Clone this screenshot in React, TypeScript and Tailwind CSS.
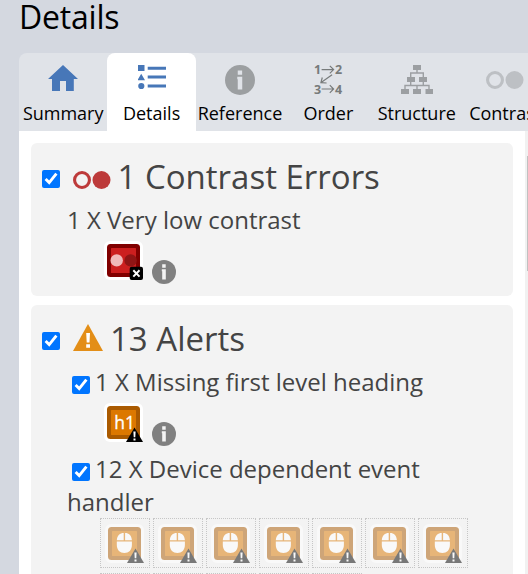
import type { ReactNode } from "react";

const font = "font-['Open_Sans','Noto_Sans',sans-serif]";

function Home() {
  return (
    <svg width="30" height="26" viewBox="0 0 30 26" fill="#4777b8">
      <path d="M15 0 30 14H25.800V26H18V16H12V26H4V14H0Z" />
    </svg>
  );
}

function DetailsIcon() {
  return (
    <svg width="28" height="25" viewBox="0 0 28 25" fill="#4777b8">
      <path d="M0 0H6.500V6H0ZM3.200 8.800 7 15.200H-.5ZM9.700 1.700H28V4.700H9.700ZM9.700 10.500H28V13.500H9.700ZM9.700 19.500H28V22.500H9.700Z" />
      <circle cx="3.300" cy="21" r="3.100" />
    </svg>
  );
}

function Info({ size, color, glyph }: { size: number; color: string; glyph: string }) {
  return (
    <svg width={size} height={size} viewBox="0 0 24 24" className="block shrink-0">
      <circle cx="12" cy="12" r="12" fill={color} />
      <path d="M10.200 4.300H13.700V7.700H10.200ZM9.800 9.300H13.800V19.500H10.200V11.300H9.800Z" fill={glyph} />
    </svg>
  );
}

function OrderIcon() {
  return (
    <svg width="30" height="30" viewBox="-0.6 0 30 30" fill="#777b7b" className="overflow-visible">
      <g fontFamily="Open Sans" fontSize="12.500" fontWeight="700">
        <text x="0.500" y="9">1</text>
        <text x="21.500" y="9">2</text>
        <text x="0.500" y="28.500">3</text>
        <text x="21.500" y="28.500">4</text>
      </g>
      <path d="M8 4.600H20M16.200 .8 20 4.600 16.200 8.400M8 24H20M16.200 20.200 20 24 16.200 27.800M18.500 9.800 7.500 17.500M8.700 12.500 7.300 17.700 13 18" fill="none" stroke="#777b7b" strokeWidth="1.200" />
    </svg>
  );
}

function StructureIcon() {
  return (
    <svg width="32" height="29" viewBox="0 0 32 29" fill="#9c9fa2">
      <path d="M12 0H20V5H12ZM6 12H14V17H6ZM18 12H26V17H18ZM0 24H8V29H0ZM12 24H20V29H12ZM24.500 24H32V29H24.500Z" />
      <path d="M16 5V8M9.700 12V8H22.300V12M9.700 17V20.500M22.300 17V20.500M4 24V20.500H28V24M16 20.500V24" fill="none" stroke="#9c9fa2" strokeWidth="1.400" />
    </svg>
  );
}

function Contrast({ color }: { color: string }) {
  return (
    <svg width="38" height="18" viewBox="0 0 38 18" className="block shrink-0">
      <circle cx="9" cy="9" r="7.450" fill="none" stroke={color} strokeWidth="3.100" />
      <circle cx="28.500" cy="9" r="9" fill={color} />
    </svg>
  );
}

function Warning() {
  return (
    <svg width="30" height="27" viewBox="0 0 30 27" className="block shrink-0">
      <path d="M15 0 30 27H0Z" fill="#e38e17" />
      <path d="M13.200 9H17L16.500 18.500H13.700ZM13.200 20.300H17V23.700H13.200Z" fill="#fff" />
    </svg>
  );
}

function BadgeTriangle() {
  return (
    <>
      <path d="M30.500 24.500 39 39H22Z" fill="#000" />
      <path d="M29.400 28.500H31.600L31.300 34.200H29.700ZM29.500 35.400H31.500V37.400H29.500Z" fill="#fff" />
    </>
  );
}

function Tile({ border, fill, children }: { border: string; fill: string; children: ReactNode }) {
  return (
    <svg width="39" height="39" viewBox="0 0 39 39" className="block shrink-0">
      <rect width="39" height="39" rx="6" fill="#fff" />
      <rect x="3" y="3" width="33" height="33" rx="3.500" fill={border} />
      <rect x="7" y="7" width="25" height="25" rx="0.500" fill={fill} />
      {children}
    </svg>
  );
}

function ContrastTile() {
  return (
    <Tile border="#800000" fill="#cc1f1f">
      <circle cx="12.700" cy="19.400" r="6.200" fill="#f0b9b9" />
      <circle cx="26.600" cy="19.400" r="6.200" fill="#8f1515" />
      <rect x="25.700" y="25.700" width="13.300" height="13.300" rx="2" fill="#000" />
      <path d="M29.300 29.200 35.500 35.600M35.500 29.200 29.300 35.600" stroke="#fff" strokeWidth="2" />
    </Tile>
  );
}

function HeadingTile() {
  return (
    <Tile border="#aa5a00" fill="#dc7800">
      <text x="10.300" y="26.200" fill="#fff" stroke="#fff" strokeWidth="0.300" fontFamily="Open Sans" fontSize="17.500">h1</text>
      <BadgeTriangle />
    </Tile>
  );
}

function MouseTile() {
  return (
    <div className="flex h-[50px] w-[50px] border border-dotted border-[#c6c6c6] pl-1 pt-[5px]">
      <div className="h-[39px] opacity-50">
        <Tile border="#aa5a00" fill="#dc7800">
          <path d="M11.800 16.200C12.200 11.500 15 9 18.700 9V16.200ZM20.100 9C23.900 9 26.500 11.500 26.900 16.200H20.100ZM11.800 17.600H26.900V21C26.900 26 23.800 29 19.400 29S11.800 26 11.800 21Z" fill="#fff" />
          <BadgeTriangle />
        </Tile>
      </div>
    </div>
  );
}

function Check() {
  return <input type="checkbox" defaultChecked className="m-0 block h-[18px] w-[18px] shrink-0" />;
}

function Tab({ label, icon, active }: { label: string; icon: ReactNode; active?: boolean }) {
  return (
    <div className={`flex h-[78px] w-[88.400px] shrink-0 flex-col items-center ${active ? "rounded-t-lg bg-white" : ""}`}>
      <div className="flex h-[48px] shrink-0 items-start justify-center pt-3">{icon}</div>
      <span className="whitespace-nowrap text-[18px] leading-6">{label}</span>
    </div>
  );
}

export default function App() {
  return (
    <div className={`flex h-[574px] w-[528px] flex-col overflow-hidden bg-[#d4d8e0] pl-[19px] text-black ${font}`}>
      <h1 className="h-[53px] shrink-0 text-[32px] leading-[33px] tracking-[-0.200px]">Details</h1>
      <nav className="flex h-[78px] shrink-0 overflow-hidden rounded-tl-lg bg-[#e0e3e8]">
        <Tab label="Summary" icon={<Home />} />
        <Tab label="Details" icon={<DetailsIcon />} active />
        <Tab label="Reference" icon={<Info size={30} color="#9c9fa1" glyph="#e0e3e8" />} />
        <Tab label="Order" icon={<OrderIcon />} />
        <Tab label="Structure" icon={<StructureIcon />} />
        <Tab label="Contrast" icon={<div className="pt-1.5"><Contrast color="#bdc0c4" /></div>} />
      </nav>
      <div className="flex h-[443px] shrink-0 overflow-hidden text-[#444]">
        <main className="flex w-[506px] shrink-0 flex-col gap-[9px] bg-white pl-3 pt-3">
          <section className="h-[153px] w-[482px] shrink-0 rounded-md bg-[#f3f3f3] pl-[11px]">
            <div className="flex h-[60px] items-start">
              <div className="pt-[27px]"><Check /></div>
              <div className="ml-[13px] pt-[28px]"><Contrast color="#bd3a3a" /></div>
              <h2 className="ml-[6.500px] whitespace-nowrap pt-[11px] text-[33px] leading-[46px]">1 Contrast Errors</h2>
            </div>
            <h3 className="ml-[25px] text-[24px] leading-[33px]">1 X Very low contrast</h3>
            <div className="ml-[62px] flex pt-[5px]">
              <ContrastTile />
              <div className="ml-[9px] pt-[19px]"><Info size={24} color="#808080" glyph="#f3f3f3" /></div>
            </div>
          </section>
          <section className="h-[300px] w-[482px] shrink-0 rounded-md bg-[#f3f3f3] pl-[11px]">
            <div className="flex h-[60px] items-start">
              <div className="pt-[27px]"><Check /></div>
              <div className="ml-[13px] pt-[19px]"><Warning /></div>
              <h2 className="ml-[7px] whitespace-nowrap pt-[11px] text-[33px] leading-[46px]">13 Alerts</h2>
            </div>
            <div className="ml-[30px] flex h-[33px]">
              <div className="pt-[11px]"><Check /></div>
              <h3 className="ml-[5px] whitespace-nowrap text-[24px] leading-[33px]">1 X Missing first level heading</h3>
            </div>
            <div className="ml-[62px] flex h-[54px] pt-[5px]">
              <HeadingTile />
              <div className="ml-[9px] pt-[19px]"><Info size={24} color="#808080" glyph="#f3f3f3" /></div>
            </div>
            <div className="ml-[30px] flex h-[33px]">
              <div className="pt-[11px]"><Check /></div>
              <h3 className="ml-[5px] whitespace-nowrap text-[24px] leading-[33px]">12 X Device dependent event</h3>
            </div>
            <p className="ml-[25px] text-[24px] leading-[33px]">handler</p>
            <div className="ml-[58px] grid w-[368px] grid-cols-7 gap-x-[3px] gap-y-[5px]">
              {Array.from({ length: 12 }, (_, i) => <MouseTile key={i} />)}
            </div>
          </section>
        </main>
        <div className="flex flex-1 justify-end bg-[#f1f1f1] pt-[25px]">
          <div className="h-[115px] w-px bg-[#c1c1c1]" />
        </div>
      </div>
    </div>
  );
}
